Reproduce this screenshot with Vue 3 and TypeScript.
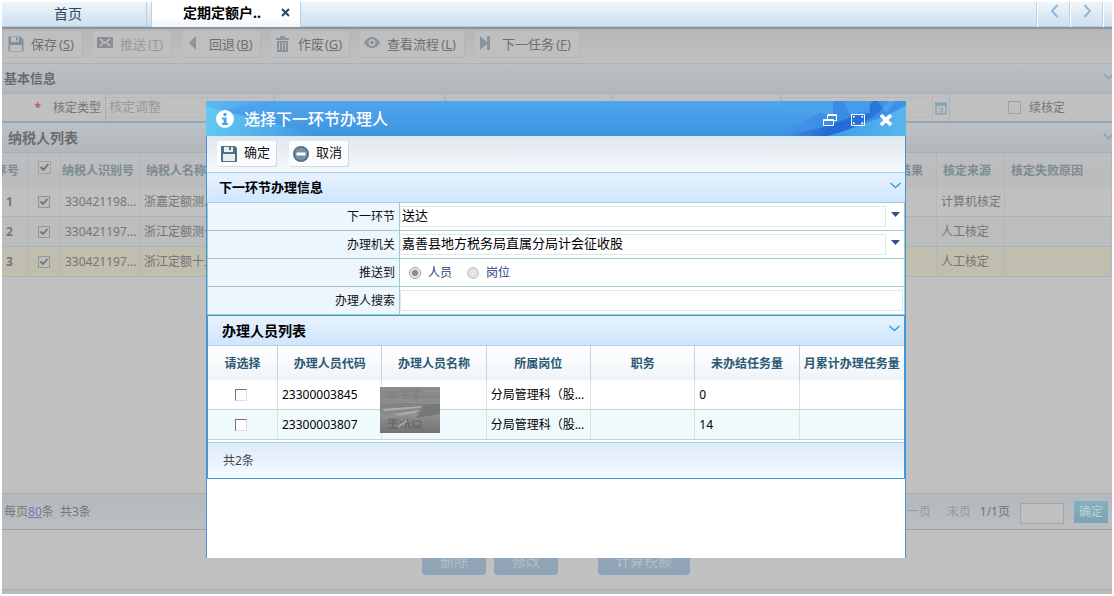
<script setup lang="ts">
import { ref } from 'vue'

interface Tool { label: string; key: string; icon: string; muted?: boolean }
interface Payer { id: string; name: string; source: string }
interface Staff { code: string; post: string; pending: number }

const tools: Tool[] = [
  { label: '保存', key: 'S', icon: 'save' },
  { label: '推送', key: 'T', icon: 'mail', muted: true },
  { label: '回退', key: 'B', icon: 'back' },
  { label: '作废', key: 'G', icon: 'trash' },
  { label: '查看流程', key: 'L', icon: 'eye' },
  { label: '下一任务', key: 'F', icon: 'next' },
]
const payers: Payer[] = [
  { id: '330421198...', name: '浙嘉定额测...', source: '计算机核定' },
  { id: '330421197...', name: '浙江定额测十...', source: '人工核定' },
  { id: '330421197...', name: '浙江定额十二...', source: '人工核定' },
]
const staff: Staff[] = [
  { code: '23300003845', post: '分局管理科（股...', pending: 0 },
  { code: '23300003807', post: '分局管理科（股...', pending: 14 },
]
const staffHeads: string[] = ['请选择', '办理人员代码', '办理人员名称', '所属岗位', '职务', '未办结任务量', '月累计办理任务量']
const step = ref('送达')
const office = ref('嘉善县地方税务局直属分局计会征收股')
const target = ref('person')
const keyword = ref('')
</script>

<template>
  <div class="page">
    <nav class="tabs">
      <button class="tab">首页</button>
      <div class="tab active">
        <span>定期定额户..</span>
        <button class="tab-close" aria-label="关闭">
          <svg width="9" height="9" viewBox="0 0 9 9"><path d="M1 1l7 7M8 1l-7 7" stroke="#2b4468" stroke-width="2" fill="none" /></svg>
        </button>
      </div>
      <div class="tab-space"></div>
      <button class="arrow" aria-label="向左">
        <svg width="9" height="14" viewBox="0 0 9 14"><path d="M7.500 1L2 7l5.500 6" stroke="#8fb6de" stroke-width="2" fill="none" /></svg>
      </button>
      <button class="arrow" aria-label="向右">
        <svg width="9" height="14" viewBox="0 0 9 14"><path d="M1.500 1L7 7l-5.500 6" stroke="#8fb6de" stroke-width="2" fill="none" /></svg>
      </button>
      <div class="arrow-end"></div>
    </nav>

    <div class="toolbar">
      <button v-for="t in tools" :key="t.key" class="tool" :class="{ muted: t.muted }">
        <svg width="16" height="16" viewBox="0 0 16 16" fill="none">
          <g v-if="t.icon === 'save'">
            <path d="M.5.5h12l3 3v12H.5z" fill="#84909a" />
            <path d="M3 1h8v5H3zM2 9h12v6H2z" fill="#bcbfc1" />
            <path d="M8 1.500h2v3H8z" fill="#84909a" />
          </g>
          <g v-else-if="t.icon === 'mail'">
            <path d="M0 1h16v11H0z" fill="#8b8f93" />
            <path d="M3 3l5 4 5-4M3 10l3-3M13 10l-3-3" stroke="#c2c2c2" stroke-width="1.500" />
          </g>
          <path v-else-if="t.icon === 'back'" d="M10 0v14L3 7z" fill="#89949c" />
          <g v-else-if="t.icon === 'trash'">
            <path d="M5 0h5v2h4v2H1V2h4zM2 5h11v11H2z" fill="#89949c" />
            <path d="M4.500 6v8M7.500 6v8M10.500 6v8" stroke="#bcbfc1" />
          </g>
          <g v-else-if="t.icon === 'eye'">
            <path d="M0 6.500C4-1 12-1 16 6.500 12 14 4 14 0 6.500z" fill="#89949c" />
            <circle cx="8" cy="6.500" r="3.500" fill="#bcbfc1" /><circle cx="8" cy="6.500" r="1.500" fill="#7b8790" />
          </g>
          <path v-else d="M1 0l7 6V0h3v14H8V8l-7 6z" fill="#89949c" />
        </svg>
        <span>{{ t.label }}<span class="key">(<u>{{ t.key }}</u>)</span></span>
      </button>
    </div>

    <h2 class="bar"><span>基本信息</span>
      <svg class="chev" width="11" height="7" viewBox="0 0 11 7"><path d="M1 1l4.500 4.500L10 1" stroke="#86a3b8" stroke-width="1.500" fill="none" /></svg>
    </h2>
    <div class="basic">
      <label class="b-label" for="kind"><i>*</i>核定类型</label>
      <div class="b-cell"><input id="kind" class="b-input" value="核定调整" disabled /></div>
      <div class="b-cell"></div>
      <div class="b-cell"><input class="b-input" aria-label="核定项目" disabled /></div>
      <div class="b-cell"></div>
      <div class="b-cell">
        <input class="b-input" aria-label="日期" disabled />
        <svg class="cal" width="12" height="14" viewBox="0 0 12 14" fill="none">
          <path d="M1 3h10v10H1z" stroke="#88a3b5" stroke-width="1.500" /><path d="M0 1h12v4H0z" fill="#88a3b5" />
          <path d="M4 7h3.500v4H4M5 9h2.500" stroke="#88a3b5" /><path d="M2 0v2M5 0v2M8 0v2M11 0v2" stroke="#c0c0c0" />
        </svg>
      </div>
      <label class="b-cell b-check"><input type="checkbox" class="plain" />续核定</label>
    </div>

    <h2 class="bar list-bar"><span>纳税人列表</span>
      <svg class="chev" width="11" height="7" viewBox="0 0 11 7"><path d="M1 1l4.500 4.500L10 1" stroke="#86a3b8" stroke-width="1.500" fill="none" /></svg>
    </h2>
    <div class="payers">
      <table>
        <colgroup><col class="c1" /><col class="c2" /><col class="c3" /><col class="c4" /><col /><col class="c6" /><col class="c7" /><col class="c8" /></colgroup>
        <thead>
          <tr>
            <th class="flush">序号</th>
            <th class="mid"><input type="checkbox" class="tick big" checked aria-label="全选" /></th>
            <th class="near">纳税人识别号</th><th>纳税人名称</th><th></th><th>结果</th><th>核定来源</th><th>核定失败原因</th>
          </tr>
        </thead>
        <tbody>
          <tr v-for="(p, i) in payers" :key="i" :class="'r' + i">
            <td class="num">{{ i + 1 }}</td>
            <td class="mid"><input type="checkbox" class="tick" checked :aria-label="'选择第' + (i + 1) + '行'" /></td>
            <td>{{ p.id }}</td><td>{{ p.name }}</td><td></td><td></td><td>{{ p.source }}</td><td></td>
          </tr>
        </tbody>
      </table>
    </div>

    <div class="pager">
      <span>每页<a href="#">80</a>条&nbsp; 共3条</span>
      <div class="pager-right">
        <span class="off">下一页</span><span class="off last">末页</span><span class="count">1/1页</span>
        <input aria-label="页码" /><button>确定</button>
      </div>
    </div>
    <div class="actions">
      <button>删除</button><button>修改</button><button class="calc">计算税额</button>
    </div>
    <div class="strip"></div>

    <section class="dialog" role="dialog" aria-labelledby="dlg-title">
      <header class="title">
        <svg class="art-left" width="150" height="35" viewBox="0 0 150 35">
          <defs><linearGradient id="gl"><stop offset="0" stop-color="#62c8f2" /><stop offset="1" stop-color="#62c8f2" stop-opacity="0" /></linearGradient></defs>
          <path d="M0 5C30 14 80 24 110 35H0z" fill="url(#gl)" /><path d="M0 0h60C40 3 15 8 0 20z" fill="url(#gl)" opacity=".6" />
        </svg>
        <svg class="art-right" width="150" height="35" viewBox="0 0 150 35">
          <defs>
            <linearGradient id="gr"><stop offset="0" stop-color="#3b8fe4" stop-opacity="0" /><stop offset=".5" stop-color="#3584e2" /><stop offset="1" stop-color="#3b8ee6" /></linearGradient>
            <linearGradient id="gd"><stop offset="0" stop-color="#3a8fe2" stop-opacity="0" /><stop offset=".5" stop-color="#2468d6" /><stop offset="1" stop-color="#2a78dc" /></linearGradient>
            <linearGradient id="gs"><stop offset="0" stop-color="#3d9ce8" /><stop offset="1" stop-color="#58b6ee" /></linearGradient>
          </defs>
          <path d="M30 0h120v8L70 35H10C40 25 65 14 78 0z" fill="url(#gr)" opacity=".8" />
          <path d="M24 0h53v13C55 13 38 8 24 0z" fill="#4ba2ec" />
          <path d="M10 35C65 31 95 20 118 0h14C125 14 100 28 72 35z" fill="url(#gd)" />
          <path d="M88 0h26v12l-20 2z" fill="#48a2ec" opacity=".8" />
          <path d="M72 35C98 28 124 18 150 5v30z" fill="url(#gs)" />
          <path d="M122 0h18l-10 12z" fill="#55b0f0" opacity=".5" />
        </svg>
        <svg class="info" width="18" height="18" viewBox="0 0 18 18"><circle cx="9" cy="9" r="9" fill="#fff" /><path d="M7.500 3h3v3h-3zM6 7.500h4.500v5.500H12v2H6v-2h1.500V9.500H6z" fill="#45a5e5" /></svg>
        <h1 id="dlg-title">选择下一环节办理人</h1>
        <div class="win">
          <button aria-label="还原"><svg width="14" height="12" viewBox="0 0 14 12" fill="none" stroke="#fff"><path d="M4.500 5V.5h9v6H10M4 1.500h9" /><path d="M.5 5.500h10v6H.5zM0 6.500h10" /></svg></button>
          <button aria-label="最大化"><svg width="14" height="12" viewBox="0 0 14 12" fill="none" stroke="#fff"><path d="M.5.5h13v11H.5z" /><path d="M2.500 4V2.500H4M10 2.500h1.500V4M2.500 8v1.500H4M10 9.500h1.500V8" /></svg></button>
          <button aria-label="关闭窗口"><svg width="14" height="14" viewBox="0 0 14 14"><path d="M2 2l10 10M12 2L2 12" stroke="#fff" stroke-width="3.600" /></svg></button>
        </div>
      </header>
      <div class="d-tools">
        <button>
          <svg width="16" height="16" viewBox="0 0 16 16"><path d="M0 0h14l2 2v14H0z" fill="#526f85" /><path d="M3 1h9v5H3zM2 8h12v7H2z" fill="#e9f0f4" /><path d="M8 1h2v3H8z" fill="#526f85" /></svg>
          <span>确定</span>
        </button>
        <button>
          <svg width="16" height="16" viewBox="0 0 16 16"><circle cx="8" cy="8" r="8" fill="#7390a4" /><circle cx="8" cy="8" r="7" fill="none" stroke="#557188" stroke-width="1.500" /><path d="M3.500 6.500h9v3h-9z" fill="#fff" /></svg>
          <span>取消</span>
        </button>
      </div>
      <h2 class="d-bar"><span>下一环节办理信息</span>
        <svg class="chev" width="11" height="7" viewBox="0 0 11 7"><path d="M.5 1l5 4.500 5-4.500" stroke="#3b9be0" stroke-width="1.500" fill="none" /></svg>
      </h2>
      <form class="form" @submit.prevent>
        <div class="row">
          <label for="step">下一环节</label>
          <div class="val"><select id="step" v-model="step"><option>送达</option></select>
            <svg class="drop" width="9" height="5" viewBox="0 0 9 5"><path d="M0 0h9L4.500 5z" fill="#2f4f8f" /></svg></div>
        </div>
        <div class="row">
          <label for="office">办理机关</label>
          <div class="val"><select id="office" v-model="office"><option>嘉善县地方税务局直属分局计会征收股</option></select>
            <svg class="drop" width="9" height="5" viewBox="0 0 9 5"><path d="M0 0h9L4.500 5z" fill="#2f4f8f" /></svg></div>
        </div>
        <div class="row">
          <span class="lab">推送到</span>
          <div class="val radios">
            <label><input v-model="target" type="radio" name="target" value="person" />人员</label>
            <label><input v-model="target" type="radio" name="target" value="post" />岗位</label>
          </div>
        </div>
        <div class="row">
          <label for="search">办理人搜索</label>
          <div class="val"><input id="search" v-model="keyword" class="search" type="text" /></div>
        </div>
      </form>
      <div class="panel">
        <h2 class="d-bar second"><span>办理人员列表</span>
          <svg class="chev" width="11" height="7" viewBox="0 0 11 7"><path d="M.5 1l5 4.500 5-4.500" stroke="#3b9be0" stroke-width="1.500" fill="none" /></svg>
        </h2>
        <table class="staff">
          <colgroup><col class="s1" /><col span="6" /></colgroup>
          <thead><tr><th v-for="h in staffHeads" :key="h">{{ h }}</th></tr></thead>
          <tbody>
            <tr v-for="(s, i) in staff" :key="s.code">
              <td class="pick"><input type="checkbox" class="sunken" :aria-label="'选择 ' + s.code" /></td>
              <td>{{ s.code }}</td>
              <td class="name">
                <svg v-if="i === 0" class="mask" width="60" height="46" viewBox="0 0 60 46">
                  <defs><linearGradient id="gm" x2="0" y2="1"><stop offset="0" stop-color="#8c8c8c" /><stop offset=".45" stop-color="#828282" /><stop offset=".6" stop-color="#8e8e8e" /><stop offset="1" stop-color="#747474" /></linearGradient></defs>
                  <path d="M0 0h60v46H0z" fill="url(#gm)" />
                  <path d="M8 5h10M9 9h8M22 4h7M21 8h9M25 3v10M32 4h9M32 9h8M36 3v10" stroke="#7c7c7c" />
                  <path d="M0 16c15-1 30-1 60 0M3 31c20-5 30-1 50-5M0 13h60M46 4h14" stroke="#989898" fill="none" />
                  <path d="M2 22l41-3-3 2-35 3zM14 27l26-4-5 3-16 2z" fill="#adadad" />
                  <path d="M44 18l16-1v10l-24 4z" fill="#777" />
                  <path d="M8 33h10M8 36h9M13 32v10M7 41h11M20 34l2 2M20 41l3-3M24 36h7M28 32l-3 10M29 37v4h3M33 34h8v5h-8zM33 41h9" stroke="#606060" fill="none" />
                  <path d="M18 40l9-6" stroke="#9da6b4" stroke-width="2" />
                </svg>
              </td>
              <td>{{ s.post }}</td><td></td><td>{{ s.pending }}</td><td></td>
            </tr>
          </tbody>
        </table>
        <div class="total">共2条</div>
      </div>
    </section>
  </div>
</template>

<style>
body { background: #fff; }
</style>

<style scoped>
* { box-sizing: border-box; }
button, input, select { font: inherit; margin: 0; padding: 0; border: 0; background: none; color: inherit; border-radius: 0; }
h1, h2 { margin: 0; }
svg { display: block; flex: none; }
.page { position: relative; display: flex; flex-direction: column; min-height: 100vh; padding: 2px; overflow: hidden; font: 12px/16px "Noto Sans", "Noto Sans CJK SC", sans-serif; color: #757575; }
.tabs { display: flex; height: 27px; background: linear-gradient(#eef6fa, #dce8f1 55%, #cfe0f0); border-bottom: 2px solid #8f9397; box-shadow: inset 0 -1px #a9c9ec; font-size: 14px; }
.tab { width: 145px; padding: 0 12px 2px 0; border-right: 1px solid #b8cfe8; color: #2c4568; }
.tab.active { display: flex; align-items: center; width: 150px; margin-left: 4px; padding: 0 10px 4px 31px; justify-content: space-between; background: linear-gradient(#fff 60%, #eef5fb); border-left: 1px solid #b8d2ec; color: #000; font-weight: bold; }
.tab-close { display: flex; }
.tab-space { flex: 1; }
.arrow, .arrow-end { display: flex; width: 33px; padding-top: 2px; justify-content: center; border-left: 1px solid #fff; box-shadow: -1px 0 #bdd4ec; }
.arrow-end { width: 9px; }
.toolbar { display: flex; gap: 11px; height: 35px; padding: 2px; align-items: flex-start; background: linear-gradient(#b6b6b6, #c0c0c0); border-bottom: 1px solid #a8b2bd; font-size: 13px; }
.tool { display: flex; gap: 7px; height: 26px; padding: 0 6px 0 4px; align-items: center; border-radius: 2px; background: #bfbfbf; box-shadow: 1px 1px #b5b5b5; color: #6f6f6f; white-space: nowrap; }
.tool > span { padding-bottom: 1px; }
.tool.muted { color: #999; }
.key { display: inline-block; min-width: 19px; }
.bar { display: flex; height: 30px; padding: 0 0 2px 2px; align-items: center; justify-content: space-between; background: linear-gradient(#bcc1c5, #b1b7bc); border-bottom: 1px solid #a3b0bc; font-size: 13px; color: #6c6c6c; overflow: hidden; }
.bar .chev { margin: 0 -2px 2px 0; }
.basic { display: grid; grid-template-columns: 103px 169px 170px 168px 168px 169px 1fr; height: 29px; border-bottom: 2px solid #92a6b7; background: #c0c0c0; }
.b-label { display: flex; gap: 12px; align-items: center; justify-content: flex-end; padding-right: 4px; white-space: nowrap; }
.b-label i { color: #c45a5a; font-style: normal; font-weight: bold; }
.b-cell { display: flex; align-items: center; border-left: 1px solid #a7b1b9; }
.b-input { width: 152px; height: 21px; padding: 0 2px 4px; border: 1px solid #b7b9bb; color: #9a9a9a; font-size: 13px; }
.cal { margin-left: 2px; }
.b-check { gap: 8px; padding-left: 58px; }
.plain { appearance: none; width: 13px; height: 13px; border: 1px solid #a0a0a0; }
.list-bar { padding: 0 0 0 6px; font-size: 14px; color: #696d70; }
.payers { flex: 1; overflow: hidden; background: #c0c0c0; }
table { border-spacing: 0; table-layout: fixed; width: 100%; }
.payers table { width: calc(100% + 7px); margin-left: -7px; }
.payers .c1 { width: 33px; }
.payers .c2 { width: 33px; }
.payers .c3 { width: 79px; }
.payers .c4 { width: 100px; }
.payers .c6 { width: 44px; }
.payers .c7 { width: 68px; }
.payers .c8 { width: 107px; }
th, td { padding: 0 4px; overflow: hidden; white-space: nowrap; text-align: left; }
.payers th { height: 34px; padding: 2px 0 0 6px; border-right: 1px solid #b0b6ba; background: linear-gradient(#bebfc0, #b8babc); color: #7b8b94; }
.payers th.near { padding-left: 1px; }
.payers th.flush { padding-left: 0; }
.payers td { height: 30px; border-right: 1px solid #b3b8bc; border-bottom: 1px solid #a9b2b9; }
.payers .num { padding-left: 11px; font-weight: bold; }
.payers .mid { padding: 0; text-align: center; }
.r1 td { background: #bbbdbe; }
.r2 td { background: #c0beae; }
.tick { appearance: none; display: block; width: 12px; height: 12px; margin: 0 auto; border: 1px solid #949494; background: #bdbdbd url("data:image/svg+xml,%3Csvg xmlns='http://www.w3.org/2000/svg' viewBox='0 0 10 10'%3E%3Cpath d='M1.500 4.500l2.500 2.500 4.500-5' fill='none' stroke='%23747474' stroke-width='1.800'/%3E%3C/svg%3E"); }
.tick.big { width: 13px; height: 13px; margin-bottom: 6px; border-color: #a2a2a2; }
.pager { display: flex; height: 37px; padding: 0 4px 0 2px; align-items: center; justify-content: space-between; background: linear-gradient(#b4b9bd, #bcbec0); border-top: 1px solid #adb2b6; border-bottom: 1px solid #93a3b3; }
.pager a { color: #7777b8; }
.pager-right { display: flex; align-items: center; }
.off { margin-right: 16px; color: #999; }
.last { margin-right: 9px; }
.count { color: #747474; }
.pager input { width: 44px; height: 21px; margin: 4px 10px 0; border: 1px solid #a5a5a5; background: #c0c0c0; }
.pager button { width: 34px; height: 22px; background: linear-gradient(#80b2bd, #7ca2b9); color: #c0d0d4; }
.actions { display: flex; gap: 8px; height: 59px; padding: 17px 2px 0 0; justify-content: center; background: #c0c0c0; }
.actions button { width: 64px; height: 28px; border-radius: 4px; background: #8fa4b6; color: #b8bfc5; font-size: 14px; }
.actions .calc { width: 92px; margin-left: 32px; }
.strip { height: 5px; border-top: 1px solid #a6aeb5; background: #b8bcbf; }

.dialog { position: absolute; top: 101px; right: 208px; bottom: 38px; left: 206px; border: solid #4396dc; border-width: 0 1px; background: #fff; color: #111; }
.title { position: relative; display: flex; height: 35px; margin: 0 -1px; padding: 0 13px 0 10px; align-items: center; background: linear-gradient(#4fa6ee, #3f94e0); color: #fff; }
.art-left { position: absolute; left: 0; top: 0; }
.art-right { position: absolute; right: 0; top: 0; }
.info, h1, .win { position: relative; }
h1 { margin-left: 10px; font-size: 16px; line-height: 24px; font-weight: 500; }
.win { display: flex; gap: 14px; margin-left: auto; padding-top: 3px; align-items: center; }
.win button { display: flex; }
.d-tools { display: flex; gap: 13px; height: 36px; padding: 5px 10px 0; background: linear-gradient(#dde7ef, #f7f9fb); font-size: 13px; }
.d-tools button { display: flex; gap: 7px; height: 25px; padding: 0 6px 0 4px; align-items: center; border-radius: 2px; background: #fcfdfe; box-shadow: 1px 1px #d3dbe0; }
.d-tools span { padding-bottom: 3px; }
.d-bar { display: flex; height: 31px; padding: 0 4px 2px 12px; align-items: center; justify-content: space-between; border: solid #a9cbe4; border-width: 1px 0; background: linear-gradient(#e7f2fe, #cfe6fd); font-size: 13px; line-height: 20px; color: #000; }
.d-bar .chev { margin-bottom: 2px; }
.form { border: solid #a3cbc6; border-width: 0 1px; }
.row { display: flex; height: 28px; border-bottom: 1px solid #a3cbc6; }
.row > label, .lab { display: flex; width: 191px; padding-right: 4px; align-items: center; justify-content: flex-end; background: #edf5fd; }
.val { display: flex; flex: 1; align-items: center; padding-right: 1px; border-left: 1px solid #a3cbc6; }
select { appearance: none; flex: 1; height: 21px; padding: 0 0 4px 1px; border: 1px solid #d9e9ef; border-left-color: #edf5f8; background: #fff; font-size: 13px; color: #000; }
.drop { margin: 0 3px 4px 5px; }
.radios { gap: 15px; padding-left: 9px; color: #1b3f85; }
.radios label { display: flex; gap: 7px; align-items: center; }
.radios input { appearance: none; width: 12px; height: 12px; border: 1px solid #c4c4c4; border-radius: 50%; background: radial-gradient(#ececec, #d6d6d6); }
.radios input:checked { border-color: #9a9a9a; background: radial-gradient(circle, #888 0 2px, #a4a4a4 3px, #f4f4f4 4px); }
.search { flex: 1; height: 21px; border: 1px solid #d9e9ef; }
.panel { border: 1px solid #3f97dc; }
.second { height: 30px; padding-bottom: 0; border-top: 0; padding-left: 14px; font-size: 14px; }
.second .chev { margin-bottom: 5px; }
.staff .s1 { width: 70px; }
.staff th { height: 34px; padding: 2px 0 0; border-right: 1px solid #bed9d4; background: linear-gradient(#fff, #eff4f8); color: #2b5873; text-align: center; }
.staff td { height: 30px; border-right: 1px solid #d7e3dd; border-bottom: 1px solid #bed7d2; color: #000; }
.staff th:last-child, .staff td:last-child { border-right: 0; }
.staff tbody tr:nth-child(2) td { background: #f0fafd; }
.staff .name { position: relative; overflow: visible; }
.mask { position: absolute; left: -2px; top: 7px; z-index: 1; }
.sunken { appearance: none; display: block; width: 12px; height: 12px; margin: 1px 0 0 23px; border: 1px solid; border-color: #777 #ddd #ddd #777; background: #fff; }
.total { height: 36px; margin-top: 2px; padding-left: 15px; line-height: 35px; border-top: 1px solid #a9cbe4; background: linear-gradient(#deecf9, #f4f9ff); color: #444; }
</style>
